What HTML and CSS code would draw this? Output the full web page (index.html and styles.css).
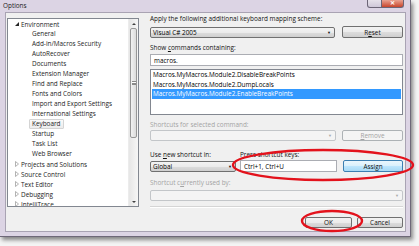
FILE: index.html
```html
<!DOCTYPE html>
<html>
<head>
<meta charset="utf-8">
<link rel="stylesheet" href="styles.css">
</head>
<body>
<div class="window">
  <div class="titlebar">
    <span class="title">Options</span>
    <div class="caption">
      <span class="cap-btn cap-help"></span>
      <span class="cap-btn cap-close">✕</span>
    </div>
  </div>
  <div class="client">
    <div class="tree">
      <div class="tree-items">
        <div class="node"><svg class="exp" viewBox="0 0 6 6"><polygon points="5,1 5,5 1,5" fill="#262626"/></svg>Environment</div>
        <div class="node child"><span class="nlabel">General</span></div>
        <div class="node child"><span class="nlabel">Add-in/Macros Security</span></div>
        <div class="node child"><span class="nlabel">AutoRecover</span></div>
        <div class="node child"><span class="nlabel">Documents</span></div>
        <div class="node child"><span class="nlabel">Extension Manager</span></div>
        <div class="node child"><span class="nlabel">Find and Replace</span></div>
        <div class="node child"><span class="nlabel">Fonts and Colors</span></div>
        <div class="node child"><span class="nlabel">Import and Export Settings</span></div>
        <div class="node child"><span class="nlabel">International Settings</span></div>
        <div class="node child"><span class="nlabel selected">Keyboard</span></div>
        <div class="node child"><span class="nlabel">Startup</span></div>
        <div class="node child"><span class="nlabel">Task List</span></div>
        <div class="node child"><span class="nlabel">Web Browser</span></div>
        <div class="node"><svg class="exp" viewBox="0 0 6 6"><polygon points="1.5,0.5 4.5,3 1.5,5.5" fill="none" stroke="#a0a0a0" stroke-width="0.8"/></svg>Projects and Solutions</div>
        <div class="node"><svg class="exp" viewBox="0 0 6 6"><polygon points="1.5,0.5 4.5,3 1.5,5.5" fill="none" stroke="#a0a0a0" stroke-width="0.8"/></svg>Source Control</div>
        <div class="node"><svg class="exp" viewBox="0 0 6 6"><polygon points="1.5,0.5 4.5,3 1.5,5.5" fill="none" stroke="#a0a0a0" stroke-width="0.8"/></svg>Text Editor</div>
        <div class="node"><svg class="exp" viewBox="0 0 6 6"><polygon points="1.5,0.5 4.5,3 1.5,5.5" fill="none" stroke="#a0a0a0" stroke-width="0.8"/></svg>Debugging</div>
        <div class="node"><svg class="exp" viewBox="0 0 6 6"><polygon points="1.5,0.5 4.5,3 1.5,5.5" fill="none" stroke="#a0a0a0" stroke-width="0.8"/></svg>IntelliTrace</div>
      </div>
      <div class="vscroll">
        <div class="sarrow"><svg viewBox="0 0 6 6" class="arr"><polygon points="1,4 3,2 5,4" fill="#404040"/></svg></div>
        <div class="thumb"><span class="grip"></span></div>
        <div class="strack"></div>
        <div class="sarrow"><svg viewBox="0 0 6 6" class="arr"><polygon points="1,2 5,2 3,4" fill="#404040"/></svg></div>
      </div>
    </div>

    <div class="panel">
      <div class="lbl">Apply the following additional keyboard mapping scheme:</div>
      <div class="row r1">
        <div class="combo w-scheme"><span>Visual C# 2005</span><span class="dd">▼</span></div>
        <div class="btn w-btn">R<u>e</u>set</div>
      </div>
      <div class="lbl m5">Show <u>c</u>ommands containing:</div>
      <div class="textbox tb-filter">macros.</div>
      <div class="list">
        <div class="item">Macros.MyMacros.Module2.DisableBreakPoints</div>
        <div class="item">Macros.MyMacros.Module2.DumpLocals</div>
        <div class="item sel">Macros.MyMacros.Module2.EnableBreakPoints</div>
      </div>
      <div class="lbl dis m5">Shortcuts for selected command:</div>
      <div class="row r2">
        <div class="combo disabled w-short"><span></span><span class="dd">▼</span></div>
        <div class="btn disabled w-btn"><u>R</u>emove</div>
      </div>
      <div class="lblrow">
        <div class="lbl w-use">Use <u>n</u>ew shortcut in:</div>
        <div class="lbl"><u>P</u>ress shortcut keys:</div>
      </div>
      <div class="row r3">
        <div class="combo w-global"><span>Global</span><span class="dd">▼</span></div>
        <div class="textbox tb-keys">Ctrl+1, Ctrl+U</div>
        <div class="btn hot w-assign">Assign</div>
      </div>
      <div class="lbl dis m6">Shortcut c<u>u</u>rrently used by:</div>
      <div class="combo disabled w-full"><span></span><span class="dd">▼</span></div>
      <div class="separator"></div>
      <div class="buttons">
        <div class="btn w-ok">OK</div>
        <div class="btn w-cancel">Cancel</div>
      </div>
    </div>
  </div>
</div>
<svg class="marks" width="419" height="246" viewBox="0 0 419 246">
  <ellipse cx="323" cy="165" rx="90" ry="15" fill="none" stroke="#e3121c" stroke-width="2.4"/>
  <ellipse cx="332" cy="221" rx="30" ry="10" fill="none" stroke="#e3121c" stroke-width="2.4"/>
</svg>
</body>
</html>
```

FILE: styles.css
```css
html, body {
  margin: 0;
  padding: 0;
}
body {
  width: 419px;
  height: 246px;
  overflow: hidden;
  background: #f4f4f4;
  font-family: "Open Sans", "Noto Sans", sans-serif;
  font-size: 6.4px;
  color: #000;
  position: relative;
}
.window {
  width: 411px;
  height: 237px;
  box-sizing: border-box;
  padding: 0 4px 4px 0;
  background: #dcd4e4;
  border-right: 1px solid #6e6878;
  border-bottom: 1px solid #6e6878;
  box-shadow: 2px 3px 4px rgba(0,0,0,0.45);
  display: flex;
  flex-direction: column;
}
.titlebar {
  height: 12px;
  display: flex;
  justify-content: space-between;
  align-items: flex-start;
  padding-left: 3px;
  padding-right: 2px;
}
.title {
  line-height: 12px;
  color: #1a1a1a;
}
.caption {
  display: flex;
}
.cap-btn {
  height: 8px;
  display: block;
  box-sizing: border-box;
  border: 1px solid #6c6576;
  border-top: none;
}
.cap-help {
  width: 15px;
  background: linear-gradient(#e6e1ea, #cfc8d8);
  border-radius: 0 0 0 3px;
}
.cap-close {
  width: 22px;
  background: linear-gradient(#e9a190, #c8452c);
  border-left: none;
  border-radius: 0 0 3px 0;
  color: #fff;
  font-size: 6px;
  line-height: 6px;
  text-align: center;
  font-weight: bold;
}
.client {
  flex: 1;
  margin-left: 5px;
  background: #f0f0f0;
  border: 1px solid #a9a3b3;
  display: grid;
  grid-template-columns: 132px 253px;
  column-gap: 11px;
  padding: 1px 0 0 1px;
  align-items: start;
}
/* tree */
.tree {
  margin-top: 4px;
  height: 189px;
  box-sizing: border-box;
  border: 1px solid #828790;
  background: #fff;
  display: flex;
  overflow: hidden;
}
.tree-items {
  flex: 1;
  overflow: hidden;
}
.node {
  height: 10px;
  display: flex;
  align-items: center;
  padding-left: 6px;
  white-space: nowrap;
  color: #1c1c1c;
}
.exp {
  width: 6px;
  height: 6px;
  margin-right: 1px;
  flex: none;
}
.node.child {
  padding-left: 21px;
}
.nlabel {
  padding: 0 2px;
  border: 1px solid transparent;
  line-height: 8px;
  border-radius: 1px;
}
.nlabel.selected {
  border-color: #d4d4d4;
  background: linear-gradient(#fafafa, #ececec);
}
.vscroll {
  width: 9px;
  background: linear-gradient(90deg, #e6e6e6, #f6f6f6);
  display: flex;
  flex-direction: column;
  border-left: 1px solid #ececec;
}
.sarrow {
  height: 9px;
  display: flex;
  align-items: center;
  justify-content: center;
}
.arr {
  width: 6px;
  height: 6px;
}
.thumb {
  height: 108px;
  margin: 0 1px;
  border: 1px solid #979797;
  border-radius: 2px;
  background: linear-gradient(90deg, #f2f2f2, #dcdcdc);
  display: flex;
  align-items: center;
  justify-content: center;
}
.grip {
  width: 4px;
  height: 4px;
  border-top: 1px solid #8a8a8a;
  border-bottom: 1px solid #8a8a8a;
  box-sizing: border-box;
  background: linear-gradient(#fff 0 1px, #8a8a8a 1px 2px, #fff 2px);
}
.strack {
  flex: 1;
}
/* right panel */
.panel {
  display: flex;
  flex-direction: column;
}
.lbl {
  height: 10px;
  line-height: 10px;
  white-space: nowrap;
  color: #111;
}
.lbl.dis {
  color: #a3a3a3;
}
.m5 { margin-top: 5px; }
.m6 { margin-top: 6px; }
.row {
  display: flex;
  align-items: center;
}
.r1 {
  height: 12px;
  margin-top: 2px;
  justify-content: space-between;
}
.r2 {
  height: 11px;
  justify-content: space-between;
}
.r3 {
  height: 12px;
}
.lblrow {
  display: flex;
  margin-top: 9px;
}
.w-use { width: 90px; }
.combo {
  height: 11px;
  box-sizing: border-box;
  border: 1px solid #707070;
  border-radius: 2px;
  background: linear-gradient(#f3f3f3 0%, #ebebeb 50%, #dddddd 51%, #cfcfcf 100%);
  display: flex;
  justify-content: space-between;
  align-items: center;
  padding: 0 3px 0 2px;
  white-space: nowrap;
}
.combo .dd {
  font-size: 4px;
  color: #111;
}
.combo.disabled {
  border-color: #c3c6c9;
  background: #f4f4f4;
}
.combo.disabled .dd {
  color: #a8a8a8;
}
.w-scheme { width: 185px; }
.w-short { width: 186px; }
.w-global { width: 86px; }
.w-full { width: 253px; margin-top: 2px; }
.btn {
  height: 12px;
  box-sizing: border-box;
  border: 1px solid #707070;
  border-radius: 2px;
  background: linear-gradient(#f2f2f2 0%, #ebebeb 50%, #dddddd 51%, #cfcfcf 100%);
  display: flex;
  align-items: center;
  justify-content: center;
  color: #111;
  white-space: nowrap;
}
.btn.disabled {
  border-color: #adb2b5;
  background: #f4f4f4;
  color: #a3a3a3;
  height: 11px;
}
.btn.hot {
  border-color: #3c7fb1;
  background: linear-gradient(#eaf6fd 0%, #d9f0fc 50%, #bee6fd 51%, #a7d9f5 100%);
}
.w-btn { width: 61px; }
.w-assign { width: 60px; margin-left: 6px; }
.textbox {
  box-sizing: border-box;
  border: 1px solid #abadb3;
  background: #fff;
  padding-left: 3px;
  display: flex;
  align-items: center;
  white-space: nowrap;
}
.tb-filter {
  height: 12px;
  margin-top: 1px;
  width: 253px;
}
.tb-keys {
  height: 12px;
  width: 97px;
  margin-left: 4px;
}
.list {
  margin-top: 3px;
  height: 46px;
  box-sizing: border-box;
  border: 1px solid #828790;
  background: #fff;
  padding: 0 1px;
}
.item {
  height: 9.5px;
  line-height: 9.5px;
  padding-left: 1px;
  white-space: nowrap;
}
.item.sel {
  background: #3399ff;
  color: #fff;
}
.separator {
  margin-top: 5px;
  height: 0;
  border-top: 1px solid #d5d5d5;
  border-bottom: 1px solid #ffffff;
}
.buttons {
  margin-top: 9px;
  display: flex;
  justify-content: flex-end;
  gap: 5px;
}
.w-ok { width: 47px; height: 11px; }
.w-cancel { width: 46px; height: 11px; }
.marks {
  position: absolute;
  left: 0;
  top: 0;
  pointer-events: none;
}
```
